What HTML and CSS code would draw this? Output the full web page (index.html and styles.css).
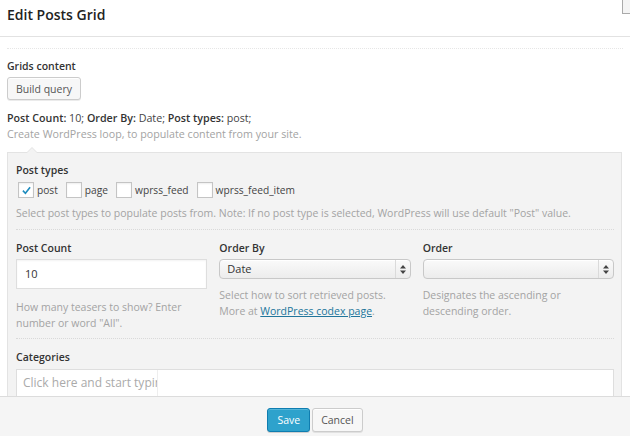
FILE: index.html
```html
<!DOCTYPE html>
<html>
<head>
<meta charset="utf-8">
<link rel="stylesheet" href="styles.css">
</head>
<body>
<div class="modal">
  <div class="header">
    <h1 class="title">Edit Posts Grid</h1>
    <div class="corner"></div>
  </div>
  <div class="content">
    <div class="rule-top"></div>
    <div class="label">Grids content</div>
    <button class="btn">Build query</button>
    <div class="summary"><b>Post Count:</b> 10; <b>Order By:</b> Date; <b>Post types:</b> post;</div>
    <div class="desc">Create WordPress loop, to populate content from your site.</div>
    <div class="panel">
      <div class="label">Post types</div>
      <div class="checks">
        <label class="check"><span class="box"><svg width="11" height="9" viewBox="0 0 12 10"><path d="M2 5.2 L4.8 8 L10 1.5" fill="none" stroke="#1e8cbe" stroke-width="1.8"/></svg></span>post</label>
        <label class="check"><span class="box"></span>page</label>
        <label class="check"><span class="box"></span>wprss_feed</label>
        <label class="check"><span class="box"></span>wprss_feed_item</label>
      </div>
      <div class="desc gap-desc">Select post types to populate posts from. Note: If no post type is selected, WordPress will use default "Post" value.</div>
      <div class="sep"></div>
      <div class="cols">
        <div class="col">
          <div class="label">Post Count</div>
          <div class="input">10</div>
          <div class="desc col-desc">How many teasers to show? Enter<br>number or word "All".</div>
        </div>
        <div class="col">
          <div class="label">Order By</div>
          <div class="select"><span class="sel-text">Date</span><span class="sel-arrow"><svg width="6" height="9" viewBox="0 0 6 9"><path d="M3 0 L6 3.5 H0 Z M3 9 L6 5.5 H0 Z" fill="#444"/></svg></span></div>
          <div class="desc sel-desc">Select how to sort retrieved posts.<br>More at <a class="link" href="#">WordPress codex page</a>.</div>
        </div>
        <div class="col">
          <div class="label">Order</div>
          <div class="select"><span class="sel-text"></span><span class="sel-arrow"><svg width="6" height="9" viewBox="0 0 6 9"><path d="M3 0 L6 3.5 H0 Z M3 9 L6 5.5 H0 Z" fill="#444"/></svg></span></div>
          <div class="desc sel-desc">Designates the ascending or<br>descending order.</div>
        </div>
      </div>
      <div class="sep sep2"></div>
      <div class="label">Categories</div>
      <div class="cat-input"><span class="cat-field">Click here and start typing</span></div>
    </div>
  </div>
  <div class="footer">
    <button class="btn btn-primary">Save</button>
    <button class="btn btn-cancel">Cancel</button>
  </div>
</div>
</body>
</html>
```

FILE: styles.css
```css
* { box-sizing: border-box; }
html, body { margin: 0; padding: 0; }
body {
  font-family: "Open Sans", "DejaVu Sans", sans-serif;
  font-size: 10.5px;
  color: #444;
  background: #fff;
}
.modal {
  height: 436px;
  display: flex;
  flex-direction: column;
  overflow: hidden;
}
.header {
  height: 37px;
  flex: none;
  display: flex;
  align-items: flex-start;
  padding-left: 7px;
  border-bottom: 1px solid #e2e2e2;
}
.title {
  margin: 0;
  font-size: 14px;
  font-weight: 600;
  line-height: 30px;
  color: #222;
}
.corner {
  margin-left: auto;
  width: 8px;
  height: 14px;
  background: #f4f4f4;
  border-left: 1px solid #aaa;
  border-bottom: 1px solid #aaa;
}
.content {
  flex: 1;
  overflow: hidden;
  padding: 0 8px 0 7px;
}
.rule-top {
  margin-top: 11px;
  border-top: 1px dotted #e6e6e6;
  margin-right: -1px;
}
.label {
  font-weight: 600;
  color: #333;
  line-height: 16px;
}
.content > .label { margin-top: 9px; }
.btn {
  font-family: inherit;
  font-size: 10.5px;
  height: 23px;
  padding: 0 8px;
  border: 1px solid #ccc;
  border-radius: 3px;
  background: #f7f7f7;
  color: #555;
  box-shadow: inset 0 1px 0 #fff, 0 1px 0 rgba(0,0,0,.08);
}
.content > .btn { margin-top: 3px; display: block; }
.summary {
  margin-top: 10px;
  line-height: 16px;
  font-size: 10.7px;
  color: #444;
}
.summary b { font-weight: 600; color: #333; }
.desc {
  line-height: 16px;
  color: #a3a3a3;
}
.content > .desc { font-size: 10.7px; }
.panel {
  position: relative;
  margin-top: 10px;
  background: #f3f3f3;
  border: 1px solid #e3e3e3;
  padding: 9px 7px 0 8px;
}
.panel::before {
  content: "";
  position: absolute;
  left: 18px;
  top: -6px;
  border: 6px solid transparent;
  border-top: 0;
  border-bottom-color: #e3e3e3;
}
.panel::after {
  content: "";
  position: absolute;
  left: 19px;
  top: -5px;
  border: 5px solid transparent;
  border-top: 0;
  border-bottom-color: #f3f3f3;
}
.checks {
  display: flex;
  align-items: center;
  margin-top: 4px;
  padding-left: 2px;
  color: #444;
}
.check {
  display: flex;
  align-items: center;
  margin-right: 8px;
  font-size: 10.2px;
}
.box {
  width: 16px;
  height: 16px;
  background: #fff;
  border: 1px solid #c4c4c4;
  box-shadow: inset 0 1px 2px rgba(0,0,0,.07);
  margin-right: 3px;
  display: flex;
  align-items: center;
  justify-content: center;
}
.gap-desc { margin-top: 7px; }
.sep {
  margin-top: 8px;
  border-top: 1px dotted #d9d9d9;
}
.cols {
  display: grid;
  grid-template-columns: repeat(3, 1fr);
  column-gap: 12px;
  margin-top: 10px;
}
.input {
  margin-top: 3px;
  height: 30px;
  background: #fff;
  border: 1px solid #dedede;
  box-shadow: inset 0 1px 2px rgba(0,0,0,.05);
  font-size: 11px;
  color: #333;
  padding-left: 8px;
  line-height: 28px;
}
.col-desc { margin-top: 10px; }
.select {
  margin-top: 3px;
  height: 20px;
  display: flex;
  border: 1px solid #c8c8c8;
  border-radius: 4px;
  background: linear-gradient(#fafafa, #ececec);
  box-shadow: inset 0 1px 0 #fff;
}
.sel-text {
  flex: 1;
  padding-left: 7px;
  font-size: 11px;
  line-height: 18px;
  color: #333;
}
.sel-arrow {
  width: 15px;
  border-left: 1px solid #dadada;
  display: flex;
  align-items: center;
  justify-content: center;
}
.sel-desc { margin-top: 8px; }
.link { color: #21759b; text-decoration: underline; }
.sep2 { margin-top: 7px; }
.sep2 + .label { margin-top: 10px; }
.cat-input {
  margin-top: 4px;
  height: 30px;
  background: #fff;
  border: 1px solid #dedede;
  padding: 0 0 0 4px;
}
.cat-field {
  display: block;
  width: 137px;
  height: 28px;
  overflow: hidden;
  white-space: nowrap;
  border-right: 1px solid #eee;
  padding-left: 2px;
  font-size: 12px;
  line-height: 26px;
  color: #aaa;
}
.footer {
  flex: none;
  height: 40px;
  border-top: 1px solid #dcdcdc;
  background: #f5f5f5;
  display: flex;
  justify-content: center;
  align-items: flex-start;
  gap: 2px;
  padding-top: 11px;
}
.btn-primary {
  height: 24px;
  background: #2ea2cc;
  border-color: #0f7db0;
  color: #fff;
  box-shadow: inset 0 1px 0 rgba(120,200,230,.5), 0 1px 0 rgba(0,0,0,.15);
  padding: 0 9px;
}
.btn-cancel {
  height: 24px;
  padding: 0 8px;
}
```
